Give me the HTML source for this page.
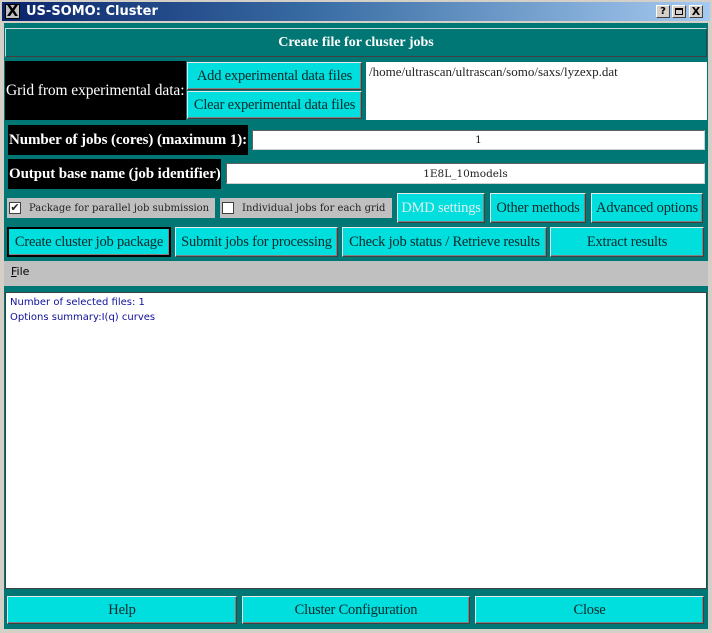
<!DOCTYPE html>
<html><head><style>
*{margin:0;padding:0;box-sizing:border-box}
body{width:712px;height:633px;position:relative;background:#d4d0c8;overflow:hidden;font-family:"Liberation Serif",serif}
.a{position:absolute}
.btn{position:absolute;background:#00dede;border:1px solid #e8e8e8;border-right-color:#404040;border-bottom-color:#404040;box-shadow:inset -1px -1px 0 #808080;color:#0a2a2a;font-size:14.5px;display:flex;align-items:center;justify-content:center;white-space:nowrap;letter-spacing:-0.2px}
.blk{position:absolute;background:#000;color:#fff;font-size:15px;font-weight:bold;display:flex;align-items:center;white-space:nowrap;letter-spacing:-0.1px}
.fld{position:absolute;background:#fff;border:1px solid #606060;border-right-color:#d0d0d0;border-bottom-color:#d0d0d0;font-size:10.5px;display:flex;align-items:center;justify-content:center;color:#222;font-family:"DejaVu Serif",serif}
.chk{position:absolute;background:#c0c0c0;font-family:"DejaVu Serif",serif;font-size:10px;color:#222;display:flex;align-items:center;white-space:nowrap;overflow:hidden}
.box{flex-shrink:0;width:12px;height:12px;background:#fff;border:1px solid #404040;margin:0 8px 0 2px;font-size:11px;line-height:10px;text-align:center;font-family:"DejaVu Sans",sans-serif}
</style></head><body>
<div class="a" style="left:2px;top:2px;width:708px;height:19px;background:linear-gradient(90deg,#0a246a,#3a6ea5 45%,#a6caf0)"></div>
<div class="a" style="left:5px;top:4px;width:15px;height:15px;background:#c0c0c0;border:1px solid #000;font:bold 15px/13px 'DejaVu Sans',sans-serif;text-align:center">X</div>
<div class="a" style="left:26px;top:4px;color:#fff;font:bold 13px 'DejaVu Sans',sans-serif">US-SOMO: Cluster</div>
<div class="a" style="left:656px;top:5px;width:14px;height:13px;background:#d4d0c8;border:1px solid #fff;border-right-color:#404040;border-bottom-color:#404040;font:bold 10px/11px 'DejaVu Sans',sans-serif;text-align:center">?</div>
<div class="a" style="left:672px;top:5px;width:14px;height:13px;background:#d4d0c8;border:1px solid #fff;border-right-color:#404040;border-bottom-color:#404040"><div style="margin:2px;width:8px;height:7px;border:1px solid #000;border-top-width:2px"></div></div>
<div class="a" style="left:689px;top:5px;width:14px;height:13px;background:#d4d0c8;border:1px solid #fff;border-right-color:#404040;border-bottom-color:#404040;font:bold 11px/11px 'DejaVu Sans',sans-serif;text-align:center">X</div>
<div class="a" style="left:4px;top:23px;width:704px;height:606px;background:#007775"></div>
<div class="a" style="left:5px;top:28px;width:702px;height:29px;border:1px solid #c8d8d8;border-right-color:#404040;border-bottom-color:#404040;color:#fff;font-size:14px;font-weight:bold;display:flex;align-items:center;justify-content:center">Create file for cluster jobs</div>
<div class="blk" style="left:5px;top:61px;width:181px;height:59px;padding-left:1px;font-weight:normal;font-size:15.5px">Grid from experimental data:</div>
<div class="btn" style="left:187px;top:62px;width:175px;height:28px">Add experimental data files</div>
<div class="btn" style="left:187px;top:91px;width:175px;height:28px">Clear experimental data files</div>
<div class="a" style="left:366px;top:62px;width:341px;height:58px;background:#fff;font-size:13px;padding:2px 3px;color:#222">/home/ultrascan/ultrascan/somo/saxs/lyzexp.dat</div>
<div class="blk" style="left:8px;top:125px;width:240px;height:30px;padding-left:1px">Number of jobs (cores) (maximum 1):</div>
<div class="fld" style="left:252px;top:130px;width:453px;height:20px">1</div>
<div class="blk" style="left:8px;top:159px;width:213px;height:30px;padding-left:1px">Output base name (job identifier)</div>
<div class="fld" style="left:226px;top:163px;width:479px;height:21px">1E8L_10models</div>
<div class="chk" style="left:7px;top:198px;width:208px;height:20px"><div class="box">✔</div>Package for parallel job submission</div>
<div class="chk" style="left:220px;top:198px;width:172px;height:20px"><div class="box"></div>Individual jobs for each grid</div>
<div class="btn" style="left:397px;top:193px;width:88px;height:30px;color:#e0f0f0">DMD settings</div>
<div class="btn" style="left:490px;top:193px;width:96px;height:30px">Other methods</div>
<div class="btn" style="left:591px;top:193px;width:112px;height:30px">Advanced options</div>
<div class="btn" style="left:7px;top:227px;width:164px;height:30px;border:2px solid #000">Create cluster job package</div>
<div class="btn" style="left:175px;top:227px;width:163px;height:30px">Submit jobs for processing</div>
<div class="btn" style="left:342px;top:227px;width:205px;height:30px">Check job status / Retrieve results</div>
<div class="btn" style="left:550px;top:227px;width:154px;height:30px">Extract results</div>
<div class="a" style="left:4px;top:261px;width:704px;height:25px;background:#c0c0c0;font:11px 'DejaVu Sans',sans-serif;padding:4px 7px;color:#000"><u>F</u>ile</div>
<div class="a" style="left:5px;top:292px;width:702px;height:297px;background:#fff;border:1px solid #404040;font:10px/15px 'DejaVu Sans',sans-serif;color:#10109a;padding:2px 4px">Number of selected files: 1<br>Options summary:I(q) curves</div>
<div class="btn" style="left:7px;top:596px;width:230px;height:28px">Help</div>
<div class="btn" style="left:242px;top:596px;width:228px;height:28px">Cluster Configuration</div>
<div class="btn" style="left:475px;top:596px;width:229px;height:28px">Close</div>
</body></html>
